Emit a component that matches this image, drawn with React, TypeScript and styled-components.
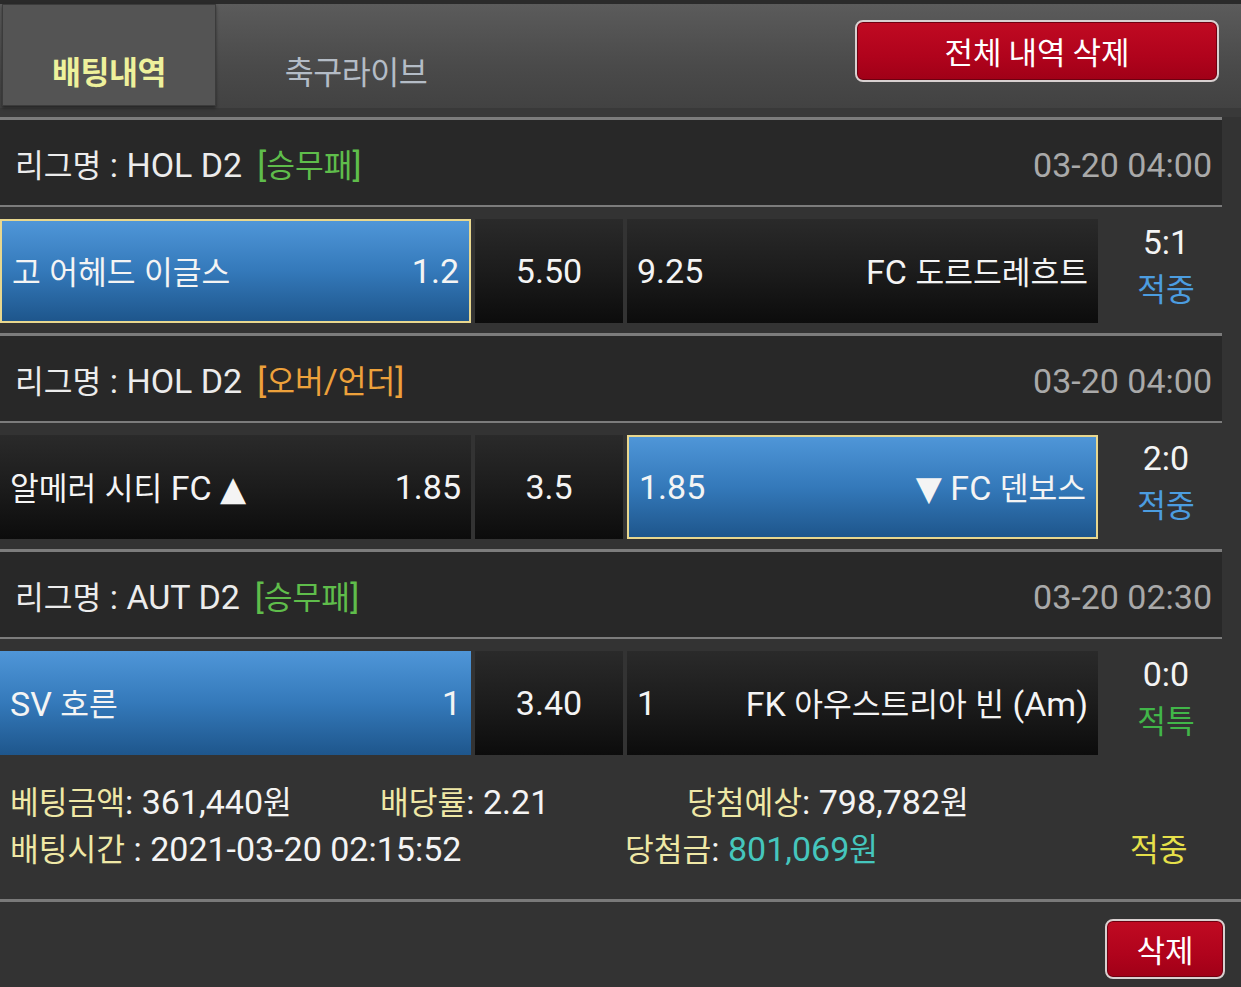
import React from "react";
import styled, { createGlobalStyle } from "styled-components";

const GlobalStyle = createGlobalStyle`
  html, body { margin: 0; padding: 0; background: #333333; }
  body {
    font-family: Roboto, "DejaVu Sans", "Noto Sans CJK KR", sans-serif;
    color: #f2f2f2;
  }
  * { box-sizing: border-box; }
`;

const Page = styled.div`
  width: 1241px;
  min-height: 987px;
  background: #333333;
  overflow: hidden;
`;

const Hangul = styled.span`
  font-family: "Noto Sans CJK KR", sans-serif;
  font-size: 0.92em;
`;

const Mixed = ({ text }: { text: string }) => {
  const parts = text.split(/([\uAC00-\uD7A3]+)/);
  return (
    <>
      {parts.map((p, i) => (i % 2 === 1 ? <Hangul key={i}>{p}</Hangul> : <React.Fragment key={i}>{p}</React.Fragment>))}
    </>
  );
};

/* ---------- top bar ---------- */
const TopBar = styled.div`
  display: flex;
  justify-content: space-between;
  align-items: flex-start;
  height: 117px;
  border-top: 4px solid #2a2a2a;
  border-bottom: 9px solid #393939;
  background: linear-gradient(180deg, #5b5b5b 0%, #4a4a4a 60%, #424242 100%);
`;

const Tabs = styled.div`
  display: flex;
  height: 102px;
  padding-left: 2px;
`;

const Tab = styled.div<{ $active?: boolean; $w: number }>`
  width: ${(p) => p.$w}px;
  height: 102px;
  display: flex;
  align-items: center;
  justify-content: center;
  padding-top: 30px;
  font-family: "Noto Sans CJK KR", sans-serif;
  font-size: 31.5px;
  letter-spacing: -0.5px;
  font-weight: ${(p) => (p.$active ? 700 : 400)};
  color: ${(p) => (p.$active ? "#eef19c" : "#b4bcc6")};
  background: ${(p) => (p.$active ? "#545454" : "transparent")};
  border: ${(p) => (p.$active ? "1px solid #3b3b3b" : "none")};
  box-shadow: ${(p) => (p.$active ? "0 2px 3px rgba(0,0,0,0.45)" : "none")};
`;

const RedButton = styled.button<{ $w: number; $h: number }>`
  width: ${(p) => p.$w}px;
  height: ${(p) => p.$h}px;
  border: 2px solid #d8d0d0;
  border-radius: 8px;
  background: linear-gradient(180deg, #c00a22 0%, #b0031c 60%, #a00017 100%);
  box-shadow: inset 0 0 0 1px #6e0010;
  color: #ffffff;
  font-family: "Noto Sans CJK KR", sans-serif;
  font-size: 31px;
  display: flex;
  align-items: center;
  justify-content: center;
  padding: 0 0 2px;
  cursor: pointer;
`;

const TopButtonWrap = styled.div`
  padding: 16px 22px 0 0;
`;

/* ---------- list ---------- */
const List = styled.div`
  width: 1222px;
`;

const LeagueHeader = styled.div`
  height: 88px;
  border-top: 3px solid #7c7c7c;
  background: #282828;
  display: flex;
  align-items: center;
  justify-content: space-between;
  padding: 4px 10px 0 15px;
  font-size: 34px;
  line-height: 40px;
`;

const LeagueName = styled.div`
  display: flex;
  align-items: center;
  color: #ececec;
`;

const Tag = styled.span<{ $color: string }>`
  margin-left: 15px;
  color: ${(p) => p.$color};
`;

const DateText = styled.span`
  color: #a9a9a9;
`;

const OddsRow = styled.div`
  border-top: 2px solid #7c7c7c;
  padding: 12px 0 10px;
  display: grid;
  grid-template-columns: 471px 148px 471px 1fr;
  column-gap: 4px;
  height: 128px;
`;

type Variant = "plain" | "blue" | "picked";

const Cell = styled.div<{ $variant: Variant; $center?: boolean }>`
  height: 104px;
  display: flex;
  align-items: center;
  justify-content: ${(p) => (p.$center ? "center" : "space-between")};
  padding: 0 10px;
  font-size: 34px;
  line-height: 40px;
  white-space: nowrap;
  color: #f4f4f4;
  background: ${(p) =>
    p.$variant === "plain"
      ? "linear-gradient(180deg, #2a2a2a 0%, #1c1c1c 50%, #0c0c0c 100%)"
      : "linear-gradient(180deg, #4f96d8 0%, #3479ba 50%, #1e568c 100%)"};
  border: ${(p) => (p.$variant === "picked" ? "2px solid #e8d78e" : "none")};
`;

const ScoreCol = styled.div`
  display: flex;
  flex-direction: column;
  align-items: center;
  justify-content: flex-start;
  padding-left: 8px;
  font-size: 34px;
  line-height: 46px;
`;

const Score = styled.span`
  color: #f4f4f4;
`;

const Result = styled.span<{ $color: string }>`
  color: ${(p) => p.$color};
`;

/* ---------- summary ---------- */
const Summary = styled.div`
  padding: 13px 0 27px 10px;
  font-size: 34px;
  line-height: 46px;
`;

const SummaryLine = styled.div<{ $cols: string }>`
  display: grid;
  grid-template-columns: ${(p) => p.$cols};
  white-space: nowrap;
`;

const Label = styled.span`
  color: #efe8a6;
`;

const Value = styled.span<{ $color?: string }>`
  color: ${(p) => p.$color || "#f4f4f4"};
`;

const StatusText = styled.span`
  color: #e6e04a;
`;

const Divider = styled.div`
  height: 3px;
  background: #7a7a7a;
`;

const Footer = styled.div`
  display: flex;
  justify-content: flex-end;
  padding: 17px 16px 0 0;
`;

type Side = { name: string; odd: string; variant: Variant };
type Match = {
  league: string;
  tag: string;
  tagColor: string;
  date: string;
  home: Side;
  draw: string;
  away: Side;
  score: string;
  result: string;
  resultColor: string;
};

const matches: Match[] = [
  {
    league: "HOL D2",
    tag: "[승무패]",
    tagColor: "#5fbd4b",
    date: "03-20 04:00",
    home: { name: "고 어헤드 이글스", odd: "1.2", variant: "picked" },
    draw: "5.50",
    away: { name: "FC 도르드레흐트", odd: "9.25", variant: "plain" },
    score: "5:1",
    result: "적중",
    resultColor: "#4c9de0",
  },
  {
    league: "HOL D2",
    tag: "[오버/언더]",
    tagColor: "#eda13b",
    date: "03-20 04:00",
    home: { name: "알메러 시티 FC ▲", odd: "1.85", variant: "plain" },
    draw: "3.5",
    away: { name: "▼ FC 덴보스", odd: "1.85", variant: "picked" },
    score: "2:0",
    result: "적중",
    resultColor: "#4c9de0",
  },
  {
    league: "AUT D2",
    tag: "[승무패]",
    tagColor: "#5fbd4b",
    date: "03-20 02:30",
    home: { name: "SV 호른", odd: "1", variant: "blue" },
    draw: "3.40",
    away: { name: "FK 아우스트리아 빈 (Am)", odd: "1", variant: "plain" },
    score: "0:0",
    result: "적특",
    resultColor: "#41b649",
  },
];

export default function App() {
  return (
    <Page>
      <GlobalStyle />
      <TopBar>
        <Tabs>
          <Tab $active $w={214}>배팅내역</Tab>
          <Tab $w={280}>축구라이브</Tab>
        </Tabs>
        <TopButtonWrap>
          <RedButton $w={364} $h={62}>전체 내역 삭제</RedButton>
        </TopButtonWrap>
      </TopBar>

      <List>
        {matches.map((m, i) => (
          <React.Fragment key={i}>
            <LeagueHeader>
              <LeagueName>
                <span>
                  <Mixed text={`리그명 : ${m.league}`} />
                </span>
                <Tag $color={m.tagColor}>
                  <Mixed text={m.tag} />
                </Tag>
              </LeagueName>
              <DateText>{m.date}</DateText>
            </LeagueHeader>
            <OddsRow>
              <Cell $variant={m.home.variant}>
                <span>
                  <Mixed text={m.home.name} />
                </span>
                <span>{m.home.odd}</span>
              </Cell>
              <Cell $variant="plain" $center>
                {m.draw}
              </Cell>
              <Cell $variant={m.away.variant}>
                <span>{m.away.odd}</span>
                <span>
                  <Mixed text={m.away.name} />
                </span>
              </Cell>
              <ScoreCol>
                <Score>{m.score}</Score>
                <Result $color={m.resultColor}>
                  <Mixed text={m.result} />
                </Result>
              </ScoreCol>
            </OddsRow>
          </React.Fragment>
        ))}
      </List>

      <Summary>
        <SummaryLine $cols="370px 307px 1fr">
          <span>
            <Label><Mixed text="베팅금액" /></Label>
            <Value><Mixed text=": 361,440원" /></Value>
          </span>
          <span>
            <Label><Mixed text="배당률" /></Label>
            <Value>: 2.21</Value>
          </span>
          <span>
            <Label><Mixed text="당첨예상" /></Label>
            <Value><Mixed text=": 798,782원" /></Value>
          </span>
        </SummaryLine>
        <SummaryLine $cols="615px 505px 1fr">
          <span>
            <Label><Mixed text="배팅시간" /></Label>
            <Value> : 2021-03-20 02:15:52</Value>
          </span>
          <span>
            <Label><Mixed text="당첨금" /></Label>
            <Value>: </Value>
            <Value $color="#45c6bd"><Mixed text="801,069원" /></Value>
          </span>
          <StatusText>
            <Mixed text="적중" />
          </StatusText>
        </SummaryLine>
      </Summary>

      <Divider />
      <Footer>
        <RedButton $w={120} $h={60}>삭제</RedButton>
      </Footer>
    </Page>
  );
}
